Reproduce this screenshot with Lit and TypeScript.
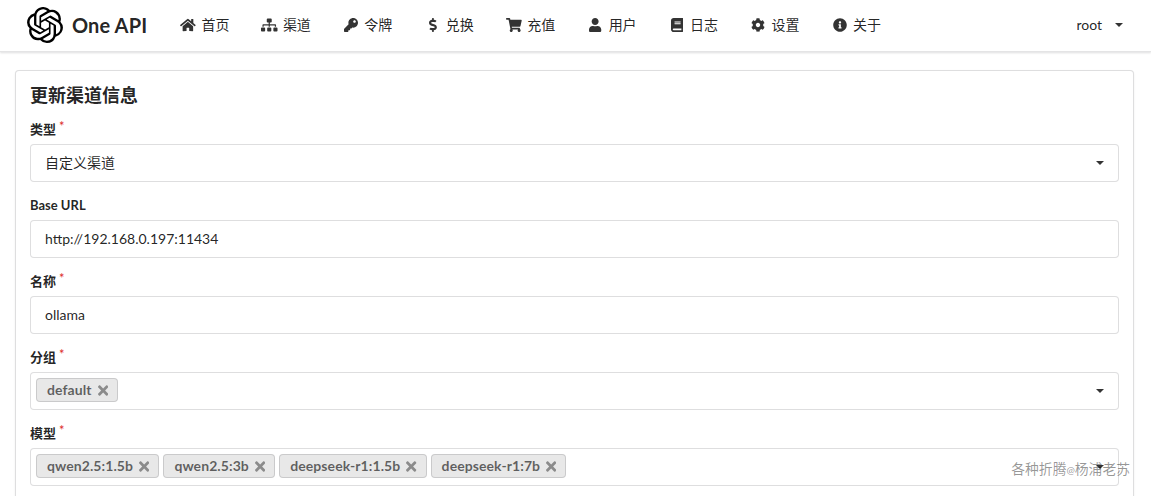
import { LitElement, html, css, svg } from "lit";
import { customElement } from "lit/decorators.js";

const ICONS: Record<string, [number, string]> = {
  home: [576, "M280.37 148.26L96 300.11V464a16 16 0 0 0 16 16l112.06-.29a16 16 0 0 0 15.92-16V368a16 16 0 0 1 16-16h64a16 16 0 0 1 16 16v95.64a16 16 0 0 0 16 16.05L464 480a16 16 0 0 0 16-16V300L295.67 148.26a12.19 12.19 0 0 0-15.3 0zM571.6 251.47L488 182.56V44.05a12 12 0 0 0-12-12h-56a12 12 0 0 0-12 12v72.61L318.47 43a48 48 0 0 0-61 0L4.34 251.47a12 12 0 0 0-1.6 16.9l25.5 31A12 12 0 0 0 45.15 301l235.22-193.74a12.19 12.19 0 0 1 15.3 0L530.9 301a12 12 0 0 0 16.9-1.6l25.5-31a12 12 0 0 0-1.7-16.93z"],
  sitemap: [640, "M128 352H32c-17.67 0-32 14.33-32 32v96c0 17.67 14.33 32 32 32h96c17.67 0 32-14.33 32-32v-96c0-17.67-14.33-32-32-32zm-24-80h192v48h48v-48h192v48h48v-57.59c0-21.17-17.23-38.41-38.41-38.41H344v-64h40c17.67 0 32-14.33 32-32V32c0-17.67-14.33-32-32-32H256c-17.67 0-32 14.33-32 32v96c0 17.67 14.33 32 32 32h40v64H94.41C73.23 224 56 241.23 56 262.41V320h48v-48zm264 80h-96c-17.67 0-32 14.33-32 32v96c0 17.67 14.33 32 32 32h96c17.67 0 32-14.33 32-32v-96c0-17.67-14.33-32-32-32zm240 0h-96c-17.67 0-32 14.33-32 32v96c0 17.67 14.33 32 32 32h96c17.67 0 32-14.33 32-32v-96c0-17.67-14.33-32-32-32z"],
  key: [512, "M512 176.001C512 273.203 433.202 352 336 352c-11.22 0-22.19-1.062-32.827-3.069l-24.012 27.014A23.999 23.999 0 0 1 261.223 384H224v40c0 13.255-10.745 24-24 24h-40v40c0 13.255-10.745 24-24 24H24c-13.255 0-24-10.745-24-24v-78.059c0-6.365 2.529-12.47 7.029-16.971l161.802-161.802C163.108 213.814 160 195.271 160 176 160 78.798 238.797.001 335.999 0 433.488-.001 512 78.511 512 176.001zM336 128c0 26.51 21.49 48 48 48s48-21.49 48-48-21.49-48-48-48-48 21.49-48 48z"],
  dollar: [288, "M209.2 233.4l-108-31.6C88.7 198.2 80 186.5 80 173.5c0-16.3 13.2-29.5 29.5-29.5h66.3c12.2 0 24.2 3.7 34.2 10.5 6.1 4.1 14.3 3.1 19.5-2l34.8-34c7.1-6.9 6.1-18.4-1.8-24.5C238 74.8 207.4 64.1 176 64V16c0-8.8-7.2-16-16-16h-32c-8.8 0-16 7.2-16 16v48h-2.5C45.8 64-5.4 118.7.5 183.6c4.2 46.1 39.4 83.6 83.8 96.6l102.5 30c12.5 3.7 21.2 15.3 21.2 28.3 0 16.3-13.2 29.5-29.5 29.5h-66.3C100 368 88 364.3 78 357.5c-6.1-4.1-14.3-3.1-19.5 2l-34.8 34c-7.1 6.9-6.1 18.4 1.8 24.5 24.5 19.2 55.1 29.9 86.5 30v48c0 8.8 7.2 16 16 16h32c8.8 0 16-7.2 16-16v-48.2c46.6-.9 90.3-28.6 105.7-72.7 21.5-61.6-14.6-124.8-72.5-141.7z"],
  cart: [576, "M528.12 301.319l47.273-208C578.806 78.301 567.391 64 551.99 64H159.208l-9.166-44.81C147.758 8.021 137.93 0 126.529 0H24C10.745 0 0 10.745 0 24v16c0 13.255 10.745 24 24 24h69.883l70.248 343.435C147.325 417.1 136 435.222 136 456c0 30.928 25.072 56 56 56s56-25.072 56-56c0-15.674-6.447-29.835-16.824-40h209.647C430.447 426.165 424 440.326 424 456c0 30.928 25.072 56 56 56s56-25.072 56-56c0-22.172-12.888-41.332-31.579-50.405l5.517-24.276c3.413-15.018-8.002-29.319-23.403-29.319H218.117l-6.545-32h293.145c11.206 0 20.92-7.754 23.403-18.681z"],
  user: [448, "M224 256c70.7 0 128-57.3 128-128S294.7 0 224 0 96 57.3 96 128s57.3 128 128 128zm89.6 32h-16.7c-22.2 10.2-46.9 16-72.9 16s-50.6-5.8-72.9-16h-16.7C60.2 288 0 348.2 0 422.4V464c0 26.5 21.5 48 48 48h352c26.5 0 48-21.5 48-48v-41.6c0-74.2-60.2-134.4-134.4-134.4z"],
  book: [448, "M448 360V24c0-13.3-10.7-24-24-24H96C43 0 0 43 0 96v320c0 53 43 96 96 96h328c13.3 0 24-10.7 24-24v-16c0-7.5-3.5-14.3-8.9-18.7-4.2-15.4-4.2-59.3 0-74.7 5.4-4.3 8.9-11.1 8.9-18.6zM128 134c0-3.3 2.7-6 6-6h212c3.3 0 6 2.7 6 6v20c0 3.3-2.7 6-6 6H134c-3.3 0-6-2.7-6-6v-20zm0 64c0-3.3 2.7-6 6-6h212c3.3 0 6 2.7 6 6v20c0 3.3-2.7 6-6 6H134c-3.3 0-6-2.7-6-6v-20zm253.4 250H96c-17.7 0-32-14.3-32-32 0-17.6 14.4-32 32-32h285.4c-1.9 17.1-1.9 46.9 0 64z"],
  cog: [512, "M487.4 315.7l-42.6-24.6c4.3-23.2 4.3-47 0-70.2l42.6-24.6c4.9-2.8 7.1-8.6 5.5-14-11.1-35.6-30-67.8-54.7-94.6-3.8-4.1-10-5.1-14.8-2.3L380.8 110c-17.9-15.4-38.5-27.3-60.8-35.1V25.8c0-5.6-3.9-10.5-9.4-11.7-36.7-8.2-74.3-7.8-109.2 0-5.5 1.2-9.4 6.1-9.4 11.7V75c-22.2 7.9-42.8 19.8-60.8 35.1L88.7 85.5c-4.9-2.8-11-1.9-14.8 2.3-24.7 26.7-43.6 58.9-54.7 94.6-1.7 5.4.6 11.2 5.5 14L67.3 221c-4.3 23.2-4.3 47 0 70.2l-42.6 24.6c-4.9 2.8-7.1 8.6-5.5 14 11.1 35.6 30 67.8 54.7 94.6 3.8 4.1 10 5.1 14.8 2.3l42.6-24.6c17.9 15.4 38.5 27.3 60.8 35.1v49.2c0 5.6 3.9 10.5 9.4 11.7 36.7 8.2 74.3 7.8 109.2 0 5.5-1.2 9.4-6.1 9.4-11.7v-49.2c22.2-7.9 42.8-19.8 60.8-35.1l42.6 24.6c4.9 2.8 11 1.9 14.8-2.3 24.7-26.7 43.6-58.9 54.7-94.6 1.5-5.5-.7-11.3-5.6-14.1zM256 336c-44.1 0-80-35.9-80-80s35.9-80 80-80 80 35.9 80 80-35.9 80-80 80z"],
  info: [512, "M256 8C119.043 8 8 119.083 8 256c0 136.997 111.043 248 248 248s248-111.003 248-248C504 119.083 392.957 8 256 8zm0 110c23.196 0 42 18.804 42 42s-18.804 42-42 42-42-18.804-42-42 18.804-42 42-42zm56 254c0 6.627-5.373 12-12 12h-88c-6.627 0-12-5.373-12-12v-24c0-6.627 5.373-12 12-12h12v-64h-12c-6.627 0-12-5.373-12-12v-24c0-6.627 5.373-12 12-12h64c6.627 0 12 5.373 12 12v100h12c6.627 0 12 5.373 12 12v24z"],
  times: [352, "M242.72 256l100.07-100.07c12.28-12.28 12.28-32.19 0-44.48l-22.24-22.24c-12.28-12.28-32.19-12.28-44.48 0L176 189.28 75.93 89.21c-12.28-12.28-32.19-12.28-44.48 0L9.21 111.45c-12.28 12.28-12.28 32.19 0 44.48L109.28 256 9.21 356.07c-12.28 12.28-12.28 32.19 0 44.48l22.24 22.24c12.28 12.28 32.2 12.28 44.48 0L176 322.72l100.07 100.07c12.28 12.28 32.2 12.28 44.48 0l22.24-22.24c12.28-12.28 12.28-32.19 0-44.48L242.72 256z"],
};

const LOGO = "M22.2819 9.8211a5.9847 5.9847 0 0 0-.5157-4.9108 6.0462 6.0462 0 0 0-6.5098-2.9A6.0651 6.0651 0 0 0 4.9807 4.1818a5.9847 5.9847 0 0 0-3.9977 2.9 6.0462 6.0462 0 0 0 .7427 7.0966 5.98 5.98 0 0 0 .511 4.9107 6.051 6.051 0 0 0 6.5146 2.9001A5.9847 5.9847 0 0 0 13.2599 24a6.0557 6.0557 0 0 0 5.7718-4.2058 5.9894 5.9894 0 0 0 3.9977-2.9001 6.0557 6.0557 0 0 0-.7475-7.0729zm-9.022 12.6081a4.4755 4.4755 0 0 1-2.8764-1.0408l.1419-.0804 4.7783-2.7582a.7948.7948 0 0 0 .3927-.6813v-6.7369l2.02 1.1686a.071.071 0 0 1 .038.052v5.5826a4.504 4.504 0 0 1-4.4945 4.4944zm-9.6607-4.1254a4.4708 4.4708 0 0 1-.5346-3.0137l.142.0852 4.783 2.7582a.7712.7712 0 0 0 .7806 0l5.8428-3.3685v2.3324a.0804.0804 0 0 1-.0332.0615L9.74 19.9502a4.4992 4.4992 0 0 1-6.1408-1.6464zM2.3408 7.8956a4.485 4.485 0 0 1 2.3655-1.9728V11.6a.7664.7664 0 0 0 .3879.6765l5.8144 3.3543-2.0201 1.1685a.0757.0757 0 0 1-.071 0l-4.8303-2.7865A4.504 4.504 0 0 1 2.3408 7.872zm16.5963 3.8558L13.1038 8.364 15.1192 7.2a.0757.0757 0 0 1 .071 0l4.8303 2.7913a4.4944 4.4944 0 0 1-.6765 8.1042v-5.6772a.79.79 0 0 0-.407-.667zm2.0107-3.0231l-.142-.0852-4.7735-2.7818a.7759.7759 0 0 0-.7854 0L9.409 9.2297V6.8974a.0662.0662 0 0 1 .0284-.0615l4.8303-2.7866a4.4992 4.4992 0 0 1 6.6802 4.66zM8.3065 12.863l-2.02-1.1638a.0804.0804 0 0 1-.038-.0567V6.0742a4.4992 4.4992 0 0 1 7.3757-3.4537l-.142.0805L8.704 5.459a.7948.7948 0 0 0-.3927.6813zm1.0976-2.3654l2.602-1.4998 2.6069 1.4998v2.9994l-2.5974 1.4997-2.6067-1.4997Z";

const icon = (name: string) => {
  const [w, d] = ICONS[name];
  return html`<svg class="glyph" viewBox="0 0 ${w} 512" aria-hidden="true">${svg`<path d=${d}></path>`}</svg>`;
};

const NAV: [string, string][] = [
  ["home", "首页"], ["sitemap", "渠道"], ["key", "令牌"], ["dollar", "兑换"], ["cart", "充值"],
  ["user", "用户"], ["book", "日志"], ["cog", "设置"], ["info", "关于"],
];

@customElement("app-root")
export class AppRoot extends LitElement {
  static styles = css`
    :host {
      display: block;
      height: 496px;
      overflow: hidden;
      position: relative;
      background: #fff;
      font-family: Lato, "Noto Sans CJK SC", sans-serif;
      font-size: 14px;
      line-height: 20px;
      color: rgba(0, 0, 0, 0.87);
    }
    * { box-sizing: border-box; }
    .bar {
      display: flex;
      align-items: center;
      height: 52px;
      padding: 0 28px 2px 27px;
      background: #fff;
      border-bottom: 1px solid #e4e4e5;
      box-shadow: 0 1px 2px 0 rgba(34, 36, 38, 0.15);
    }
    .brand {
      display: flex;
      align-items: center;
      gap: 9px;
      width: 137px;
      font-size: 20px;
      font-weight: 700;
      letter-spacing: 0.12px;
      color: rgba(0, 0, 0, 0.87);
    }
    .brand svg { width: 36px; height: 36px; fill: #000; display: block; }
    .nav { display: flex; align-items: center; }
    .item {
      display: flex;
      align-items: center;
      padding: 0 16px;
      color: rgba(0, 0, 0, 0.87);
    }
    .ic {
      width: 16.5px;
      margin-right: 4.95px;
      display: flex;
      justify-content: center;
      align-items: center;
      flex: none;
    }
    .glyph { height: 14px; display: block; fill: rgba(0, 0, 0, 0.8); }
    .user {
      margin-left: auto;
      display: flex;
      align-items: center;
      gap: 13px;
      color: rgba(0, 0, 0, 0.87);
    }
    .caret {
      width: 0;
      height: 0;
      border-left: 4px solid transparent;
      border-right: 4px solid transparent;
      border-top: 4px solid rgba(0, 0, 0, 0.8);
      flex: none;
    }
    .page { padding: 18px 17px 0 15px; }
    .card {
      border: 1px solid rgba(34, 36, 38, 0.15);
      border-radius: 4px;
      padding: 14px 14px 0;
      box-shadow: 0 1px 2px 0 rgba(34, 36, 38, 0.08);
      background: #fff;
    }
    h4 {
      margin: 0 0 14px;
      font-size: 18px;
      line-height: 20px;
      font-weight: 700;
      color: rgba(0, 0, 0, 0.87);
    }
    .field { margin-bottom: 13px; }
    label {
      display: block;
      font-size: 13px;
      font-weight: 700;
      line-height: 20px;
      margin-bottom: 5px;
      color: rgba(0, 0, 0, 0.87);
    }
    .req { color: #db2828; margin-left: 3px; position: relative; top: -3px; font-weight: 400; }
    .control {
      position: relative;
      height: 38px;
      display: flex;
      align-items: center;
      gap: 4px;
      border: 1px solid rgba(34, 36, 38, 0.15);
      border-radius: 4px;
      padding: 0 14px;
      background: #fff;
    }
    .control.multi { padding: 5px 5px 0; align-items: flex-start; }
    .control .caret { position: absolute; right: 14px; top: 16px; }
    .tag {
      display: flex;
      align-items: center;
      height: 24px;
      padding: 0 9px 0 10px;
      background: #e8e8e8;
      border: 1px solid rgba(34, 36, 38, 0.15);
      border-radius: 4px;
      font-weight: 700;
      font-size: 14px;
      letter-spacing: 0.08px;
      color: rgba(0, 0, 0, 0.6);
      gap: 6px;
    }
    .tag .glyph { height: 15px; fill: rgba(0, 0, 0, 0.4); }
    .mark {
      position: absolute;
      right: 21px;
      top: 459px;
      font-size: 13.8px;
      line-height: 20px;
      color: rgba(0, 0, 0, 0.42);
      white-space: nowrap;
    }
    .at { font-size: 10px; }
  `;

  private tag(t: string) {
    return html`<span class="tag">${t}${icon("times")}</span>`;
  }

  render() {
    return html`
      <header class="bar">
        <div class="brand">
          <svg viewBox="0 0 24 24" aria-hidden="true">${svg`<path d=${LOGO}></path>`}</svg>
          <span>One API</span>
        </div>
        <nav class="nav">
          ${NAV.map(([i, t]) => html`<a class="item"><span class="ic">${icon(i)}</span>${t}</a>`)}
        </nav>
        <div class="user">root <span class="caret"></span></div>
      </header>
      <main class="page">
        <section class="card">
          <h4>更新渠道信息</h4>
          <div class="field">
            <label>类型<span class="req">*</span></label>
            <div class="control">自定义渠道<span class="caret"></span></div>
          </div>
          <div class="field">
            <label>Base URL</label>
            <div class="control">http://192.168.0.197:11434</div>
          </div>
          <div class="field">
            <label>名称<span class="req">*</span></label>
            <div class="control">ollama</div>
          </div>
          <div class="field">
            <label>分组<span class="req">*</span></label>
            <div class="control multi">${this.tag("default")}<span class="caret"></span></div>
          </div>
          <div class="field">
            <label>模型<span class="req">*</span></label>
            <div class="control multi">
              ${["qwen2.5:1.5b", "qwen2.5:3b", "deepseek-r1:1.5b", "deepseek-r1:7b"].map((t) => this.tag(t))}
              <span class="caret"></span>
            </div>
          </div>
        </section>
      </main>
      <div class="mark">各种折腾<span class="at">@</span>杨浦老苏</div>
    `;
  }
}
